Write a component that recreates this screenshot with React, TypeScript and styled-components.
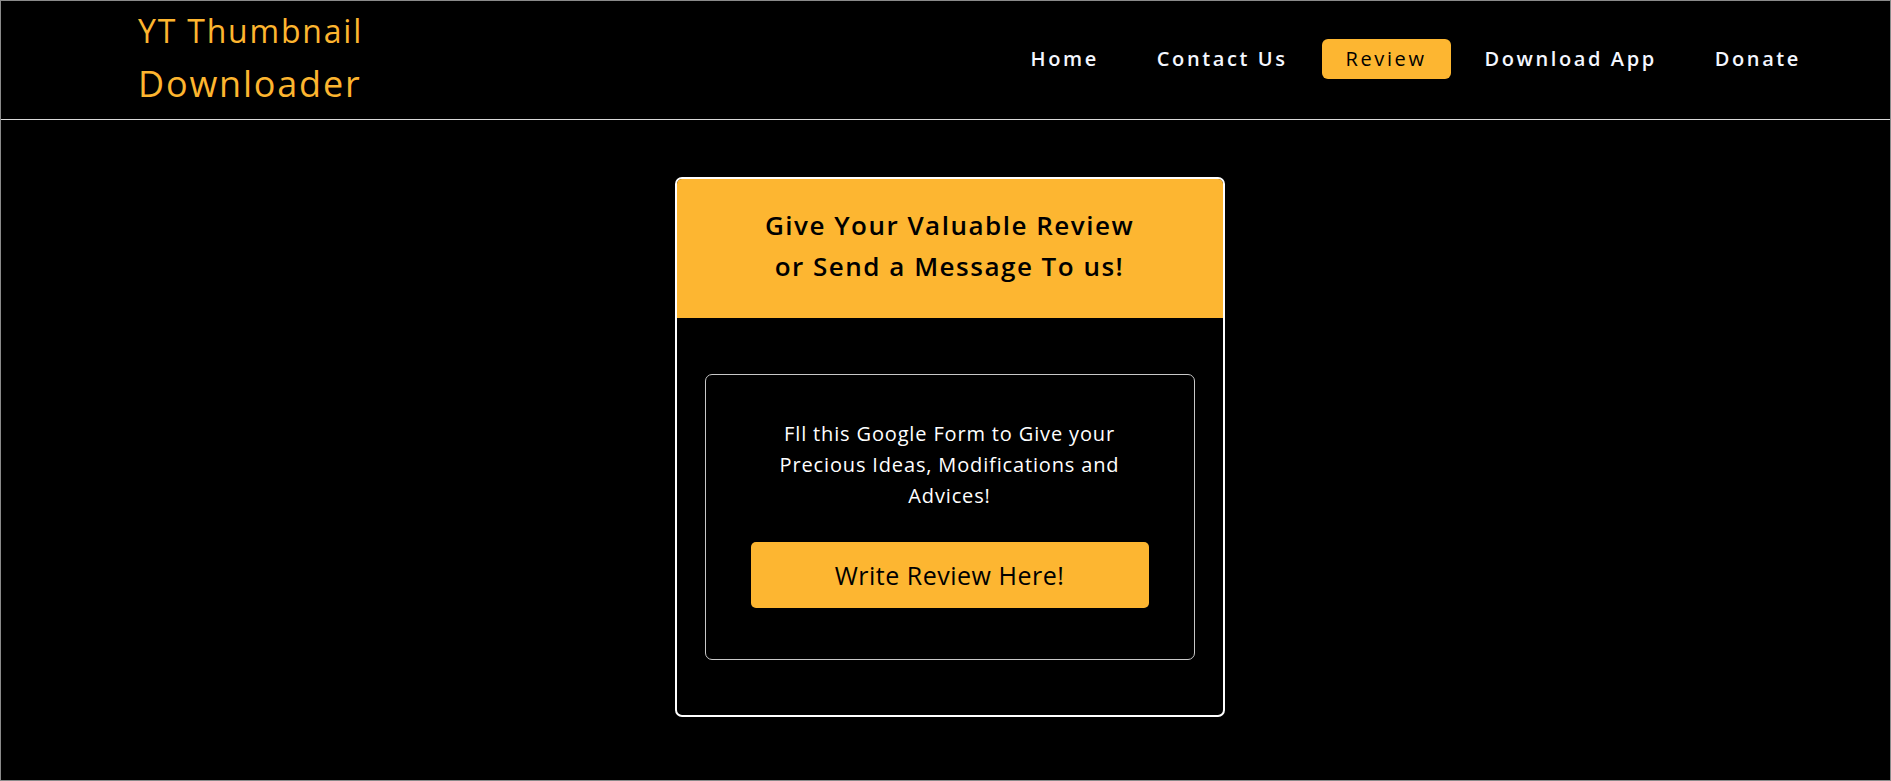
import styled, { createGlobalStyle } from "styled-components";

const GlobalStyle = createGlobalStyle`
  html, body {
    margin: 0;
    padding: 0;
    background: #000;
  }

  * {
    box-sizing: border-box;
  }
`;

const Page = styled.div`
  min-height: 100vh;
  background: #000;
  border: 1px solid #8a8a8a;
  font-family: "Open Sans", "Noto Sans", sans-serif;
`;

const Header = styled.header`
  height: 119px;
  display: flex;
  align-items: center;
  justify-content: space-between;
  padding: 0 65px 2px 137px;
  border-bottom: 1px solid #d9d9d9;
`;

const Logo = styled.div`
  display: flex;
  flex-direction: column;
  margin-top: 5px;
  color: #fdb52f;
`;

const LogoLine = styled.span<{ $size: number; $height: number }>`
  font-size: ${(p) => p.$size}px;
  line-height: ${(p) => p.$height}px;
  font-weight: 500;
  letter-spacing: 1.8px;
`;

const Nav = styled.nav`
  display: flex;
  align-items: center;
  gap: 10px;
`;

const NavLink = styled.a<{ $active?: boolean }>`
  display: block;
  height: 40px;
  line-height: 40px;
  padding: 0 24px;
  border-radius: 6px;
  font-size: 20px;
  letter-spacing: 2.6px;
  text-decoration: none;
  color: ${(p) => (p.$active ? "#000" : "#f4f7ff")};
  background: ${(p) => (p.$active ? "#fdb631" : "transparent")};
  font-weight: ${(p) => (p.$active ? 400 : 600)};
`;

const Main = styled.main`
  display: flex;
  justify-content: center;
  padding: 57px 0 60px 8px;
`;

const Card = styled.section`
  width: 550px;
  border: 2px solid #fff;
  border-radius: 7px;
  overflow: hidden;
`;

const CardHead = styled.div`
  background: #fdb631;
  padding: 26px 20px 31px;
  text-align: center;
`;

const CardTitle = styled.h2`
  margin: 0;
  font-size: 26px;
  line-height: 41px;
  font-weight: 600;
  letter-spacing: 1.5px;
  color: #000;
`;

const CardBody = styled.div`
  padding: 56px 28px 55px;
`;

const FormBox = styled.div`
  border: 1px solid #c8c8c8;
  border-radius: 7px;
  padding: 43px 45px 51px;
  text-align: center;
`;

const FormText = styled.p`
  margin: 0 0 31px;
  font-size: 20px;
  line-height: 31px;
  letter-spacing: 0.85px;
  color: #fff;
`;

const ReviewButton = styled.a`
  display: block;
  height: 66px;
  line-height: 66px;
  border-radius: 5px;
  background: #fdb631;
  color: #000;
  font-size: 25px;
  letter-spacing: 0.5px;
  text-decoration: none;
`;

const links = ["Home", "Contact Us", "Review", "Download App", "Donate"];

export default function App() {
  return (
    <Page>
      <GlobalStyle />
      <Header>
        <Logo>
          <LogoLine $size={32} $height={44}>
            YT Thumbnail
          </LogoLine>
          <LogoLine $size={36} $height={62}>
            Downloader
          </LogoLine>
        </Logo>
        <Nav>
          {links.map((link) => (
            <NavLink key={link} href="#" $active={link === "Review"}>
              {link}
            </NavLink>
          ))}
        </Nav>
      </Header>
      <Main>
        <Card>
          <CardHead>
            <CardTitle>
              Give Your Valuable Review
              <br />
              or Send a Message To us!
            </CardTitle>
          </CardHead>
          <CardBody>
            <FormBox>
              <FormText>
                Fll this Google Form to Give your
                <br />
                Precious Ideas, Modifications and
                <br />
                Advices!
              </FormText>
              <ReviewButton href="#">Write Review Here!</ReviewButton>
            </FormBox>
          </CardBody>
        </Card>
      </Main>
    </Page>
  );
}
